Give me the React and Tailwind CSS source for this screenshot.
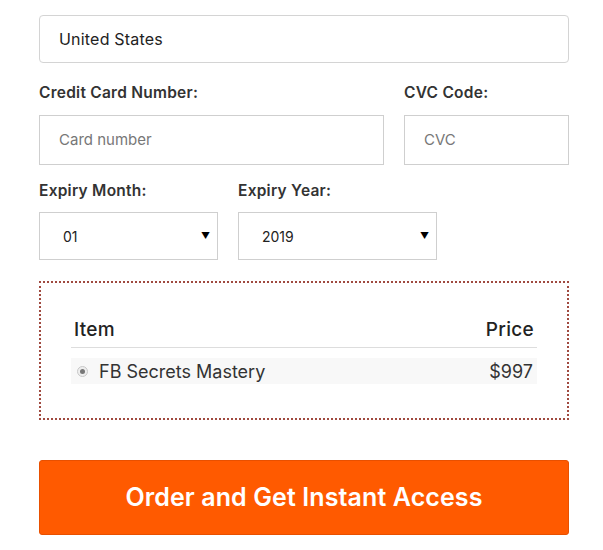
export default function App() {
  const font = { fontFamily: '"Inter", "Open Sans", sans-serif' };
  const label = "h-[22px] text-[15.5px] font-semibold text-[#333] tracking-[0.25px] leading-[22px]";
  return (
    <div className="w-[603px] h-[550px] bg-white overflow-hidden" style={font}>
      <div className="ml-[39px] w-[530px] pt-[15px]">
        <div className="h-[48px] border border-[#d4d4d4] rounded-[4px] flex items-center pl-[19px] text-[16px] tracking-[0.2px] text-[#222]">
          United States
        </div>
        <div className="flex gap-[20px] mt-[19px]">
          <div className="w-[345px]">
            <div className={label}>Credit Card Number:</div>
            <div className="mt-[11px] h-[50px] border border-[#cfcfcf] flex items-center pl-[19px] text-[15px] text-[#777]">Card number</div>
          </div>
          <div className="w-[165px]">
            <div className={label}>CVC Code:</div>
            <div className="mt-[11px] h-[50px] border border-[#cfcfcf] flex items-center pl-[19px] text-[15px] text-[#777]">CVC</div>
          </div>
        </div>
        <div className="flex gap-[20px] mt-[15px]">
          <div className="w-[179px]">
            <div className={label}>Expiry Month:</div>
            <div className="mt-[10px] h-[48px] border border-[#cfcfcf] flex items-center justify-between pl-[23px] pr-[7px] text-[14px] text-[#222]">
              <span>01</span>
              <span className="text-[9px] text-black">▼</span>
            </div>
          </div>
          <div className="w-[199px]">
            <div className={label}>Expiry Year:</div>
            <div className="mt-[10px] h-[48px] border border-[#cfcfcf] flex items-center justify-between pl-[23px] pr-[7px] text-[14px] text-[#222]">
              <span>2019</span>
              <span className="text-[9px] text-black">▼</span>
            </div>
          </div>
        </div>
        <div className="mt-[21px] h-[139px] border-2 border-dotted border-[#a04a40] px-[30px] pt-[36px]">
          <div className="flex justify-between items-end px-[3px] h-[22px] text-[19px] font-medium text-[#222] tracking-[0.3px] leading-[22px]">
            <span>Item</span>
            <span>Price</span>
          </div>
          <div className="mt-[6px] border-t border-[#ddd]"></div>
          <div className="mt-[10px] h-[26px] bg-[#f8f8f8] flex items-center justify-between pl-[6px] pr-[4px] text-[18px] text-[#333]">
            <div className="flex items-center gap-[11px]">
              <span className="w-[11px] h-[11px] rounded-full border border-[#c8c8c8] bg-[#eee] flex items-center justify-center">
                <span className="w-[5px] h-[5px] rounded-full bg-[#777]"></span>
              </span>
              <span>FB Secrets Mastery</span>
            </div>
            <span>$997</span>
          </div>
        </div>
        <div className="mt-[40px] h-[75px] rounded-[3px] bg-[#ff5a00] border border-[#e85000] flex items-center justify-center text-white text-[25px] font-semibold tracking-[0.1px]">
          Order and Get Instant Access
        </div>
      </div>
    </div>
  );
}
